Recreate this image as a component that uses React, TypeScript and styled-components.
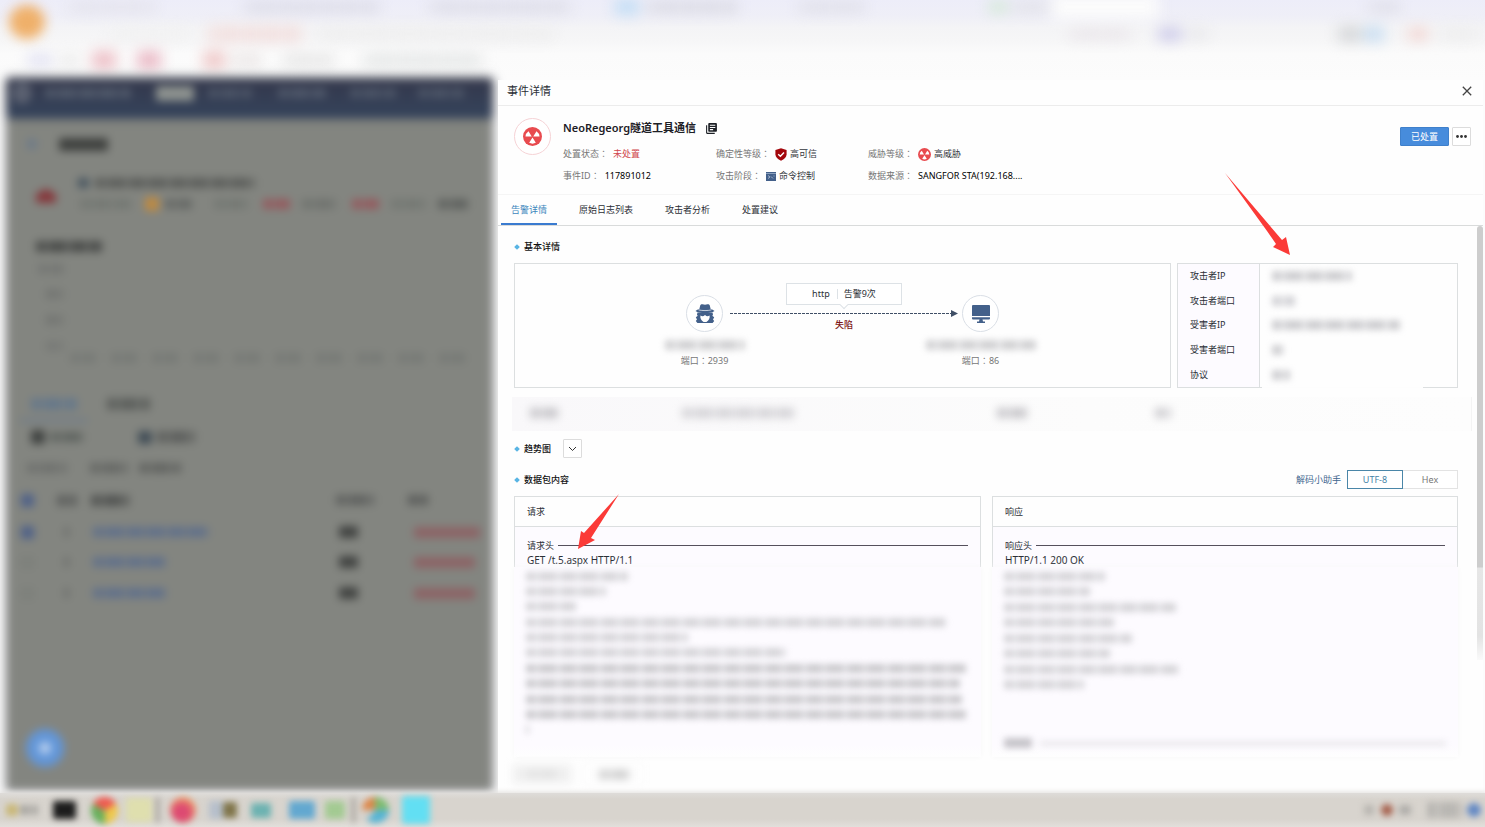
import React from "react";
import styled, { createGlobalStyle, css } from "styled-components";
import { MdLibraryBooks } from "react-icons/md";

const GlobalStyle = createGlobalStyle`
  *, *::before, *::after { box-sizing: border-box; }
  body {
    margin: 0;
    background: #fcfcfc;
    color: #2b2f36;
    font: 9px/14px "Noto Sans", "Noto Sans CJK SC", sans-serif;
  }
  button { font: inherit; color: inherit; cursor: pointer; }
`;

/* ---------- blurred placeholders ---------- */

type Mark = { gap?: number; w: number; h?: number; c?: string; fill?: string; round?: boolean; solid?: boolean };

const MarkLine = styled.div<{ $top?: number; $soft?: number }>`
  display: flex;
  align-items: center;
  height: 10px;
  margin-top: ${(p) => p.$top ?? 0}px;
  ${(p) => p.$soft && css`filter: blur(${p.$soft}px);`}
`;

const MarkBlock = styled.span<{ $m: Mark }>`
  flex: none;
  width: ${(p) => p.$m.w}px;
  height: ${(p) => p.$m.h ?? 10}px;
  margin-left: ${(p) => p.$m.gap ?? 0}px;
  border-radius: ${(p) => (p.$m.round ? "50%" : "2px")};
  color: ${(p) => p.$m.c ?? "#c4c4c6"};
  --thin: color-mix(in srgb, currentColor 55%, transparent);
  background: ${(p) =>
    p.$m.fill ??
    (p.$m.solid || p.$m.round
      ? "currentColor"
      : "repeating-linear-gradient(90deg, currentColor 0 9px, var(--thin) 9px 13px, currentColor 13px 30px, var(--thin) 30px 35px, currentColor 35px 41px)")};
`;

const Marks = ({ items, top, soft }: { items: Mark[]; top?: number; soft?: number }) => (
  <MarkLine $top={top} $soft={soft} aria-hidden="true">
    {items.map((m, i) => (
      <MarkBlock key={i} $m={m} />
    ))}
  </MarkLine>
);

/* ---------- page frame ---------- */

const Page = styled.div`
  display: flex;
  flex-direction: column;
  min-height: 100vh;
  overflow: hidden;
`;

const Browser = styled.header`
  position: relative;
  height: 80px;
  overflow: hidden;
  background: linear-gradient(#ededf9 0, #efeff7 16px, #f4f4f6 28px, #f6f6f7 40px, #fbfbfb 54px, #fcfcfc 80px);
`;

const BrowserMarks = styled.div`
  filter: blur(7px);
`;

const Avatar = styled.span`
  position: absolute;
  top: 5px;
  left: 9px;
  width: 36px;
  height: 34px;
  border-radius: 50%;
  background: #efb06a;
  filter: blur(6px);
`;

const Workspace = styled.main`
  flex: 1;
  display: grid;
  grid-template-columns: 498fr 985fr;
  padding-right: 2px;
`;

const Backdrop = styled.section`
  position: relative;
  margin: 0 7px 4px 8px;
  background: #838580;
  box-shadow: 0 0 6px 2px #7b7c80;
  filter: blur(4px);
`;

const BackdropNav = styled.div`
  height: 38px;
  padding-top: 8px;
  background: linear-gradient(#34384c, #35445c);
  box-shadow: 0 -1px 7px 0 #3c4152;
`;

const HelpBubble = styled.span`
  position: absolute;
  left: 18px;
  bottom: 22px;
  display: grid;
  place-items: center;
  width: 38px;
  height: 38px;
  border-radius: 50%;
  background: #6296d8;
  &::after {
    content: "";
    width: 12px;
    height: 12px;
    border-radius: 50%;
    background: #bcd2f0;
  }
`;

const Taskbar = styled.footer`
  position: relative;
  z-index: 2;
  display: flex;
  justify-content: space-between;
  height: 34px;
  padding: 12px 4px 0 6px;
  background: linear-gradient(#dedcd9, #d8d4ce 6px, #d8d4ce 26px, #e2dfdb);
  box-shadow: 0 0 5px 1px #e0dedb;
`;

/* ---------- drawer ---------- */

const Drawer = styled.section`
  position: relative;
  z-index: 1;
  display: flex;
  flex-direction: column;
  min-width: 0;
  background: #fefefe;
`;

const DrawerHead = styled.div`
  display: flex;
  align-items: center;
  justify-content: space-between;
  height: 26px;
  padding: 0 11px 4px 9px;
  border-bottom: 1px solid #ececec;
`;

const DrawerTitle = styled.h1`
  margin: 0;
  font-size: 11px;
  font-weight: 400;
  line-height: 16px;
`;

const CloseButton = styled.button`
  display: grid;
  place-items: center;
  padding: 0;
  border: 0;
  background: none;
  color: #444;
`;

const Summary = styled.div`
  display: flex;
  align-items: flex-start;
  height: 89px;
  padding: 12px 12px 0 16px;
  border-bottom: 1px solid #f5f5f5;
`;

const Ring = styled.span<{ $color: string }>`
  flex: none;
  display: grid;
  place-items: center;
  width: 37px;
  height: 37px;
  border: 1px solid ${(p) => p.$color};
  border-radius: 50%;
  background: #fff;
`;

const SummaryText = styled.div`
  flex: 1;
  margin-left: 12px;
`;

const EventName = styled.h2`
  display: flex;
  align-items: center;
  gap: 9px;
  margin: 2px 0 10px;
  font-size: 11px;
  font-weight: 600;
  line-height: 16px;
  color: #1d2026;
`;

const Facts = styled.dl`
  display: grid;
  grid-template-columns: 153px 152px 200px;
  row-gap: 6px;
  margin: 0;
`;

const Fact = styled.div`
  display: flex;
  align-items: center;
  height: 16px;
  white-space: nowrap;
`;

const FactLabel = styled.dt`
  color: #777;
`;

const MidColon = styled.span`
  font-family: "Noto Sans CJK TC", sans-serif;
`;

const FactValue = styled.dd<{ $tone?: "dark" | "red" }>`
  display: flex;
  align-items: center;
  gap: 3px;
  margin: 0 0 0 5px;
  color: ${(p) => (p.$tone === "red" ? "#d0454c" : p.$tone === "dark" ? "#000" : "#33363c")};
`;

const Actions = styled.div`
  display: flex;
  gap: 3px;
  margin-top: 9px;
`;

const PrimaryButton = styled.button`
  width: 49px;
  height: 19px;
  padding: 0;
  border: 1px solid #3f80cb;
  border-radius: 1px;
  background: #478cdc;
  color: #fff;
`;

const SquareButton = styled.button`
  display: grid;
  place-items: center;
  width: 19px;
  height: 19px;
  padding: 0;
  border: 1px solid #dcdcdc;
  border-radius: 1px;
  background: #fff;
  color: #333;
`;

const Tabs = styled.nav`
  display: flex;
  gap: 12px;
  height: 31px;
  padding-left: 3px;
  border-bottom: 1px solid #d9dbdb;
`;

const Tab = styled.button<{ $active?: boolean }>`
  padding: 2px 10px 0;
  border: 0;
  border-bottom: 2px solid ${(p) => (p.$active ? "#3a7bd0" : "transparent")};
  background: none;
  color: ${(p) => (p.$active ? "#3d86bd" : "#2b2f36")};
`;

const Scroller = styled.div`
  flex: 1;
  display: flex;
`;

const ScrollThumb = styled.span`
  flex: none;
  width: 6px;
  height: 434px;
  border-radius: 3px 3px 0 0;
  background: linear-gradient(#cdcdcd 341px, #e6e6e6 342px, #e3e3e3 410px, #fafafa);
`;

const Content = styled.div`
  flex: 1;
  min-width: 0;
  display: flex;
  flex-direction: column;
  padding: 12px 19px 0 16px;
`;

const SectionTitle = styled.h3`
  display: flex;
  align-items: center;
  gap: 5px;
  margin: 0;
  font-size: 9px;
  font-weight: 500;
  line-height: 18px;
  color: #111;
  &::before {
    content: "";
    width: 4px;
    height: 4px;
    margin: 0 0 0 1px;
    background: #58b4e4;
    transform: rotate(45deg);
  }
`;

const SectionBar = styled.div`
  display: flex;
  align-items: center;
  gap: 12px;
  height: 19px;
`;

const Overview = styled.div`
  display: grid;
  grid-template-columns: 657fr 281fr;
  gap: 6px;
  margin-top: 7px;
`;

const FlowCard = styled.div`
  display: flex;
  justify-content: center;
  height: 125px;
  border: 1px solid #dcdfe0;
`;

const FlowNode = styled.div`
  display: flex;
  flex-direction: column;
  align-items: center;
  width: 37px;
  padding-top: 31px;
  white-space: nowrap;
  color: #777;
`;

const NodePort = styled.span`
  margin-top: 4px;
`;

const FlowLink = styled.div`
  display: flex;
  flex-direction: column;
  align-items: center;
  width: 228px;
  margin: 0 4px 0 7px;
  padding-top: 19px;
`;

const Callout = styled.div`
  position: relative;
  display: flex;
  align-items: center;
  justify-content: center;
  width: 116px;
  height: 22px;
  margin-bottom: 3px;
  border: 1px solid #dde2e6;
  background: #fff;
  &::after {
    content: "";
    position: absolute;
    bottom: -4px;
    left: 54px;
    width: 6px;
    height: 6px;
    border: solid #dde2e6;
    border-width: 0 1px 1px 0;
    background: #fff;
    transform: rotate(45deg);
  }
`;

const CalloutPart = styled.span`
  line-height: 10px;
  & + & {
    margin-left: 7px;
    padding-left: 6px;
    border-left: 1px solid #dde2e6;
  }
`;

const Verdict = styled.strong`
  font-weight: 500;
  color: #7c1515;
`;

const InfoCard = styled.div`
  position: relative;
  border: 1px solid #dcdfe0;
  &::after {
    content: "";
    position: absolute;
    left: 84px;
    right: 34px;
    bottom: -1px;
    height: 1px;
    background: #fdfdfd;
  }
`;

const InfoTable = styled.table`
  width: 100%;
  height: 123px;
  border-collapse: collapse;
  th, td { padding: 0 0 0 12px; text-align: left; font-weight: 400; }
  th { width: 81px; border-right: 1px solid #dcdfe0; background: #fdfbff; }
`;

const ExtraRow = styled.div`
  height: 34px;
  margin: 9px -14px 8px -2px;
  padding-top: 11px;
  border-right: 1px solid #f4f4f4;
  background: linear-gradient(90deg, #f9f8fa, #fcfcfc 60%, #fdfdfd);
`;

const PacketBar = styled(SectionBar)`
  justify-content: space-between;
  margin-top: 12px;
`;

const Decoder = styled.div`
  display: flex;
  align-items: center;
`;

const DecoderLink = styled.a`
  margin-right: 6px;
  color: #3f668f;
  text-decoration: none;
`;

const Encoding = styled.button<{ $active?: boolean }>`
  position: relative;
  z-index: ${(p) => (p.$active ? 1 : 0)};
  width: 56px;
  height: 19px;
  padding: 0;
  margin-left: ${(p) => (p.$active ? 0 : -1)}px;
  border: 1px solid ${(p) => (p.$active ? "#4a86a8" : "#e3e3e3")};
  background: #fff;
  color: ${(p) => (p.$active ? "#4583a6" : "#777")};
`;

const Packets = styled.div`
  flex: 1;
  display: grid;
  grid-template-columns: 467fr 466fr;
  gap: 11px;
  margin-top: 7px;
`;

const Packet = styled.article`
  position: relative;
  display: flex;
  flex-direction: column;
`;

const PacketTitle = styled.h4`
  margin: 0;
  padding: 7px 12px;
  border: 1px solid #dcdfe0;
  font-size: 9px;
  font-weight: 400;
  line-height: 15px;
`;

const PacketHead = styled.div`
  height: 40px;
  padding: 11px 12px 0;
  border: solid #dcdfe0;
  border-width: 0 1px;
  background: #fdfbff;
`;

const Legend = styled.div`
  display: flex;
  align-items: center;
  gap: 4px;
  height: 15px;
  &::after {
    content: "";
    flex: 1;
    height: 1px;
    background: #55505c;
  }
`;

const PacketLine = styled.div`
  height: 14px;
  font-size: 10px;
  line-height: 14px;
  white-space: nowrap;
`;

const PacketRest = styled.div`
  flex: 1;
  padding: 4px 12px 0;
  overflow: hidden;
  background: linear-gradient(#fdfbff calc(100% - 12px), #fefefe);
  box-shadow: 0 0 6px #f8f8f8;
`;

const RestLines = styled.div<{ $count: number }>`
  display: flex;
  flex-direction: column;
  justify-content: space-between;
  height: ${(p) => p.$count * 15 - 1}px;
  filter: blur(3px);
`;

const RestSection = styled.div`
  display: flex;
  align-items: center;
  gap: 8px;
  margin-top: 48px;
  filter: blur(3px);
  &::after {
    content: "";
    flex: 1;
    height: 5px;
    background: #eae8ec;
  }
`;

const Pager = styled.div`
  display: flex;
  gap: 12px;
  height: 36px;
  padding: 7px 14px;
  filter: blur(4px);
`;

const PagerButton = styled.button<{ $disabled?: boolean }>`
  display: grid;
  place-items: center;
  width: 60px;
  height: 20px;
  padding: 0;
  border: 1px solid #f8f8f8;
  background: ${(p) => (p.$disabled ? "#f0f0f0" : "#fefefe")};
`;

const Pointer = styled.svg<{ $left: number; $top: number }>`
  position: absolute;
  z-index: 3;
  left: ${(p) => p.$left}px;
  top: ${(p) => p.$top}px;
  pointer-events: none;
`;

/* ---------- icons ---------- */

const RadiationIcon = ({ size }: { size: number }) => (
  <svg width={size} height={size} viewBox="0 0 20 20" aria-hidden="true">
    <circle cx="10" cy="10" r="10" fill="#e84b4f" />
    <path d="M9.200 10H2.600a7.500 7.500 0 0 1 3.200-5.600ZM10.800 10h6.600a7.500 7.500 0 0 0-3.200-5.600ZM10 11l3.500 5.700a8 8 0 0 1-7 0Z" fill="#fff" />
  </svg>
);

const ShieldIcon = () => (
  <svg width="12" height="13" viewBox="0 0 12 13" aria-hidden="true">
    <path d="M6 .3 11.600 2v4.300c0 3-2.400 5-5.600 6.400C2.800 11.300.4 9.300.4 6.300V2Z" fill="#a3060b" />
    <path d="m3.200 6.200 2.200 2.100 3.600-3.800" fill="none" stroke="#fff" strokeWidth="1.400" />
  </svg>
);

const StageIcon = () => (
  <svg width="10" height="9" viewBox="0 0 10 9" aria-hidden="true">
    <path d="M0 0h10v9H0Z" fill="#43608a" />
    <path d="M0 1.500h10" stroke="#8aa0bd" />
    <path d="m2 3.500 2 1.500-2 1.500M5 4.500 7 6.500M8 3.500v1" fill="none" stroke="#b9c7da" strokeWidth=".8" />
  </svg>
);

const AgentIcon = () => (
  <svg width="20" height="19" viewBox="0 0 20 19" aria-hidden="true" fill="#43608a">
    <path d="M5.200 1.600C5.500.5 6.600 0 7.500.2L10 .8l2.500-.6c.9-.2 2 .3 2.300 1.400l.9 3.600H4.300Z" />
    <path d="M.5 7C2.500 5 6 4.600 10 4.600s7.500.4 9.500 2.400c-2 1.500-5.500 2-9.500 2S2.500 8.500.5 7Z" />
    <path d="M3.600 5.900c4 .9 8.800.9 12.800 0" fill="none" stroke="#fff" strokeWidth=".7" />
    <path d="M2.400 8.400h15.200l.4 2.500-.8.8 2 1.500-1.200 2.300 1.200 1.500-1.600 2H2.400l-1.600-2L2 15.500.8 13.200l2-1.500-.8-.8Z" />
    <path d="M5.400 11.500c1.600.9 3.300.9 4.100-.2h1c.8 1.100 2.500 1.100 4.100.2.500 2.500-.9 5.300-3.200 6.500H8.600c-2.300-1.200-3.700-4-3.200-6.500Z" fill="#fff" />
  </svg>
);

const MonitorIcon = () => (
  <svg width="18" height="18" viewBox="0 0 18 18" aria-hidden="true" fill="#43608a">
    <path d="M1 0h16a1 1 0 0 1 1 1v10H0V1a1 1 0 0 1 1-1ZM0 12.200h18v1.300a1 1 0 0 1-1 1H1a1 1 0 0 1-1-1ZM7.500 14.500h3l.5 2h2V18H5v-1.500h2Z" />
  </svg>
);

const LinkArrow = () => (
  <svg width="228" height="10" viewBox="0 0 228 10" aria-hidden="true">
    <path d="M0 5.500h221" stroke="#3f4f66" strokeDasharray="3 1" />
    <path d="M221 2l7 3.500-7 3.500Z" fill="#3f4f66" />
  </svg>
);

/* ---------- data ---------- */

const ink = "#5c5e5b";
const faint = "#747873";
const blue = "#60708a";
const red = "#94595d";

const browserRows: { top: number; items: Mark[] }[] = [
  { top: 2, items: [{ gap: 70, w: 85, c: "#e2e1ea" }, { gap: 90, w: 135, c: "#d9d9e4" }, { gap: 50, w: 140, c: "#dadae4" }, { gap: 45, w: 24, h: 16, c: "#c3def5", solid: true }, { gap: 8, w: 90, c: "#d6d6df" }, { gap: 62, w: 65, c: "#dddde6" }, { gap: 125, w: 18, c: "#cfe8d0", solid: true }, { gap: 4, w: 40, c: "#e0e0e6" }, { w: 108, h: 26, c: "#fbfbfb", solid: true }, { gap: 210, w: 30, c: "#dcdce6" }] },
  { top: 17, items: [{ gap: 110, w: 80, c: "#f0f0f0" }, { gap: 18, w: 95, h: 16, c: "#f2dedd" }, { gap: 15, w: 235, c: "#ececec" }, { gap: 517, w: 60, c: "#e8e3e8" }, { gap: 28, w: 24, h: 14, c: "#ceccea", solid: true }, { gap: 6, w: 20, c: "#e4e4e8" }, { gap: 130, w: 24, h: 16, c: "#d6d8da", solid: true }, { gap: 2, w: 20, h: 16, c: "#c9def2", solid: true }, { gap: 24, w: 20, h: 12, c: "#f3d5d1", solid: true }, { gap: 12, w: 40, c: "#ececec" }] },
  { top: 16, items: [{ gap: 28, w: 24, c: "#d9d9f0" }, { gap: 8, w: 20, c: "#e6e6e6" }, { gap: 12, w: 24, h: 18, c: "#edc0c7", solid: true }, { gap: 21, w: 24, h: 18, c: "#eabac6", solid: true }, { gap: 42, w: 22, h: 18, c: "#efc9c9", solid: true }, { gap: 6, w: 30, c: "#e6e0e0" }, { gap: 22, w: 50, c: "#e0e0e0" }, { gap: 30, w: 120, c: "#dde0e0" }] },
];

const tableRow = (name: number, tag: number, checked: boolean): Mark[] => [
  { gap: 13, w: 13, h: 13, c: checked ? "#4f6188" : "#7d807b", solid: true },
  { gap: 30, w: 5, c: "#6c6e6b" },
  { gap: 24, w: name, c: blue },
  { gap: 246 - name, w: 19, h: 12, c: "#424442", solid: true },
  { gap: 56, w: tag, h: 11, c: "#8c6365", solid: true },
];

const backdropRows: { top: number; items: Mark[] }[] = [
  { top: 21, items: [{ gap: 19, w: 10, c: "#6d7a88" }, { gap: 22, w: 49, h: 13, c: "#404240", solid: true }] },
  { top: 29, items: [{ gap: 70, w: 12, c: "#46545f" }, { gap: 5, w: 160, c: ink }] },
  { top: 1, items: [{ gap: 28, w: 20, h: 17, fill: "linear-gradient(150deg, transparent 35%, #85383c 36%) 0 0 / 10px no-repeat, linear-gradient(210deg, transparent 35%, #85383c 36%) 10px 0 / 10px no-repeat" }] },
  { top: 0, items: [{ gap: 72, w: 52, c: faint }, { gap: 13, w: 14, h: 14, c: "#bd8a42", solid: true }, { gap: 6, w: 27, c: "#666966" }, { gap: 22, w: 35, c: faint }, { gap: 14, w: 27, c: red }, { gap: 12, w: 35, c: "#70736f" }, { gap: 15, w: 27, c: red }, { gap: 12, w: 36, c: faint }, { gap: 11, w: 30, c: "#5f625f" }] },
  { top: 32, items: [{ gap: 28, w: 66, h: 11, c: "#4a4c4a" }] },
  { top: 13, items: [{ gap: 30, w: 26, c: "#757774" }] },
  { top: 15, items: [{ gap: 38, w: 17, c: "#737572" }] },
  { top: 16, items: [{ gap: 38, w: 17, c: "#737572" }] },
  { top: 16, items: [{ gap: 38, w: 17, c: "#777976" }] },
  { top: 2, items: Array.from({ length: 10 }, (_, i) => ({ gap: i ? 15 : 62, w: 26, c: "#777a76" })) },
  { top: 36, items: [{ gap: 23, w: 46, h: 12, c: "#66788a" }, { gap: 30, w: 43, h: 12, c: "#5d605d" }] },
  { top: 6, items: [{ gap: 12, w: 68, h: 3, c: "#6b7a8b", solid: true }] },
  { top: 7, items: [{ gap: 23, w: 14, h: 14, c: "#404341", solid: true }, { gap: 5, w: 34, c: "#606561" }, { gap: 54, w: 14, h: 13, c: "#424e57", solid: true }, { gap: 5, w: 38, h: 12, c: "#5e605e" }] },
  { top: 21, items: [{ gap: 19, w: 40, c: "#6f716e" }, { gap: 23, w: 38, c: "#666865" }, { gap: 11, w: 42, c: "#626461" }] },
  { top: 22, items: [{ gap: 13, w: 13, h: 13, c: "#4f6188", solid: true }, { gap: 23, w: 20, h: 11, c: "#5e605e" }, { gap: 14, w: 38, h: 11, c: "#525452" }, { gap: 207, w: 38, c: "#5f615f" }, { gap: 34, w: 20, c: "#5a5c5a" }] },
  { top: 22, items: tableRow(116, 66, true) },
  { top: 20, items: tableRow(73, 61, false) },
  { top: 21, items: tableRow(73, 61, false) },
];

const taskIcons: Mark[] = [
  { w: 12, h: 12, c: "#c9b879", solid: true }, { gap: 2, w: 18, c: "#a9a7a2" },
  { gap: 15, w: 23, h: 18, c: "#1c1c1c", solid: true },
  { gap: 15, w: 27, h: 27, round: true, fill: "conic-gradient(from -60deg, #ee5a50 0 120deg, #eec84c 120deg 240deg, #68b05c 240deg)" },
  { gap: 8, w: 26, h: 24, c: "#dfdfae", solid: true }, { gap: 4, w: 3, h: 26, c: "#9a968f", solid: true },
  { gap: 11, w: 26, h: 26, round: true, fill: "radial-gradient(circle at 45% 60%, #dd4a72 35%, #f0a860 75%)" },
  { gap: 13, w: 14, h: 18, c: "#b6bfcb", solid: true }, { w: 14, h: 16, c: "#80754a", solid: true },
  { gap: 14, w: 20, h: 15, c: "#6cb2b1", solid: true },
  { gap: 18, w: 26, h: 18, c: "#62a8d0", solid: true },
  { gap: 10, w: 20, h: 18, c: "#a3ca92", solid: true }, { gap: 7, w: 3, h: 26, c: "#9a968f", solid: true },
  { gap: 7, w: 27, h: 26, round: true, fill: "conic-gradient(#7cbc70 0 90deg, #55b4d4 90deg 220deg, #d4d0ca 220deg 270deg, #dd8648 270deg)" },
  { gap: 13, w: 28, h: 28, c: "#62dff3", solid: true },
];

const trayIcons: Mark[] = [
  { w: 10, c: "#b8b5b0", solid: true }, { gap: 7, w: 12, h: 12, c: "#a5604c", round: true },
  { gap: 6, w: 12, c: "#b0aeaa", solid: true }, { gap: 16, w: 36, h: 16, c: "#b9b7b3" },
  { gap: 4, w: 14, h: 14, c: "#6389c4", round: true },
];

const tabs = ["告警详情", "原始日志列表", "攻击者分析", "处置建议"];

const info: [string, Mark][] = [
  ["攻击者IP", { w: 80, c: "#cfcfd2" }],
  ["攻击者端口", { w: 23, c: "#d4d4d8" }],
  ["受害者IP", { w: 128, c: "#cfcfd2" }],
  ["受害者端口", { w: 12, c: "#cfcfd2" }],
  ["协议", { w: 18, c: "#cfcfd2" }],
];

const requestWidths = [102, 80, 50, 420, 162, 260, 440, 434, 436, 440, 3];
const responseWidths = [101, 86, 172, 110, 128, 106, 175, 80];

/* ---------- page ---------- */

const Colon = () => <MidColon lang="zh-TW">：</MidColon>;

const FactItem = ({ label, tone, children }: {
  label: string; tone?: "dark" | "red"; children: React.ReactNode;
}) => (
  <Fact>
    <FactLabel>{label}<Colon /></FactLabel>
    <FactValue $tone={tone}>{children}</FactValue>
  </Fact>
);

const PacketView = ({ title, legend, line, widths, children }: {
  title: string; legend: string; line: string; widths: number[]; children?: React.ReactNode;
}) => (
  <Packet>
    <PacketTitle>{title}</PacketTitle>
    <PacketHead>
      <Legend>{legend}</Legend>
      <PacketLine>{line}</PacketLine>
    </PacketHead>
    <PacketRest>
      <RestLines $count={widths.length}>
        {widths.map((w, i) => (
          <Marks key={i} items={[{ w, h: 9, c: w > 430 ? "#cbcace" : "#d6d5d9" }]} />
        ))}
      </RestLines>
      {children}
    </PacketRest>
  </Packet>
);

export default function App() {
  return (
    <>
      <GlobalStyle />
      <Page lang="zh-CN">
        <Browser>
          <BrowserMarks>
            {browserRows.map((r, i) => <Marks key={i} {...r} />)}
          </BrowserMarks>
          <Avatar />
        </Browser>

        <Workspace>
          <Backdrop aria-hidden="true">
            <BackdropNav>
              <Marks items={[{ gap: 4, w: 20, h: 22, c: "#5a6070", round: true }, { gap: 13, w: 86, c: "#515a6b" }, { gap: 25, w: 38, h: 15, c: "#8d928f", solid: true }, { gap: 14, w: 44, c: "#4c5567" }, { gap: 26, w: 48, c: "#4f586a" }, { gap: 24, w: 46, c: "#4c5567" }, { gap: 22, w: 46, c: "#4c5567" }]} />
            </BackdropNav>
            {backdropRows.map((r, i) => <Marks key={i} {...r} />)}
            <HelpBubble />
          </Backdrop>

          <Drawer>
            <DrawerHead>
              <DrawerTitle>事件详情</DrawerTitle>
              <CloseButton aria-label="关闭">
                <svg width="10" height="10" viewBox="0 0 10 10" aria-hidden="true">
                  <path d="m.8.8 8.400 8.400M9.200.8.8 9.200" stroke="currentColor" strokeWidth="1.300" />
                </svg>
              </CloseButton>
            </DrawerHead>

            <Summary>
              <Ring $color="#f6d3d6"><RadiationIcon size={19} /></Ring>
              <SummaryText>
                <EventName>NeoRegeorg隧道工具通信<MdLibraryBooks size={13} /></EventName>
                <Facts>
                  <FactItem label="处置状态" tone="red">未处置</FactItem>
                  <FactItem label="确定性等级"><ShieldIcon />高可信</FactItem>
                  <FactItem label="威胁等级"><RadiationIcon size={13} />高威胁</FactItem>
                  <FactItem label="事件ID" tone="dark">117891012</FactItem>
                  <FactItem label="攻击阶段"><StageIcon />命令控制</FactItem>
                  <FactItem label="数据来源" tone="dark">SANGFOR STA(192.168....</FactItem>
                </Facts>
              </SummaryText>
              <Actions>
                <PrimaryButton>已处置</PrimaryButton>
                <SquareButton aria-label="更多">
                  <svg width="11" height="3" viewBox="0 0 11 3" aria-hidden="true" fill="currentColor">
                    <circle cx="1.500" cy="1.500" r="1.400" />
                    <circle cx="5.500" cy="1.500" r="1.400" />
                    <circle cx="9.500" cy="1.500" r="1.400" />
                  </svg>
                </SquareButton>
              </Actions>
            </Summary>

            <Tabs>
              {tabs.map((t, i) => <Tab key={t} $active={i === 0}>{t}</Tab>)}
            </Tabs>

            <Scroller>
              <Content>
                <SectionTitle>基本详情</SectionTitle>
                <Overview>
                  <FlowCard>
                    <FlowNode>
                      <Ring $color="#dadfe6"><AgentIcon /></Ring>
                      <Marks top={8} soft={3} items={[{ w: 80, c: "#d2d2d4" }]} />
                      <NodePort>端口<Colon />2939</NodePort>
                    </FlowNode>
                    <FlowLink>
                      <Callout><CalloutPart>http</CalloutPart><CalloutPart>告警9次</CalloutPart></Callout>
                      <LinkArrow />
                      <Verdict>失陷</Verdict>
                    </FlowLink>
                    <FlowNode>
                      <Ring $color="#dadfe6"><MonitorIcon /></Ring>
                      <Marks top={8} soft={3} items={[{ w: 110, c: "#d2d2d4" }]} />
                      <NodePort>端口<Colon />86</NodePort>
                    </FlowNode>
                  </FlowCard>
                  <InfoCard>
                    <InfoTable>
                      <tbody>
                        {info.map(([label, mark]) => (
                          <tr key={label}>
                            <th scope="row">{label}</th>
                            <td><Marks soft={3} items={[mark]} /></td>
                          </tr>
                        ))}
                      </tbody>
                    </InfoTable>
                    <Pointer $left={47} $top={-91} width="66" height="84" viewBox="0 0 66 84" aria-hidden="true">
                      <path d="M0 0 57 67l4-3 4 18-17-8 3-3-9-13Z" fill="#fb3a37" />
                    </Pointer>
                  </InfoCard>
                </Overview>

                <ExtraRow>
                  <Marks soft={4} items={[{ gap: 18, w: 28, c: "#c6c5c9" }, { gap: 124, w: 112, c: "#d3d2d6" }, { gap: 203, w: 30, c: "#c6c5c9" }, { gap: 128, w: 16, c: "#cccbcf" }]} />
                </ExtraRow>

                <SectionBar>
                  <SectionTitle>趋势图</SectionTitle>
                  <SquareButton aria-label="展开趋势图">
                    <svg width="9" height="6" viewBox="0 0 9 6" aria-hidden="true">
                      <path d="m1 1 3.500 3.500L8 1" fill="none" stroke="currentColor" />
                    </svg>
                  </SquareButton>
                </SectionBar>

                <PacketBar>
                  <SectionTitle>数据包内容</SectionTitle>
                  <Decoder>
                    <DecoderLink href="#decoder">解码小助手</DecoderLink>
                    <Encoding $active>UTF-8</Encoding>
                    <Encoding>Hex</Encoding>
                  </Decoder>
                </PacketBar>

                <Packets>
                  <PacketView title="请求" legend="请求头" line="GET /t.5.aspx HTTP/1.1" widths={requestWidths}>
                    <Pointer $left={64} $top={-2} width="42" height="56" viewBox="0 0 42 56" aria-hidden="true">
                      <path d="M41 0 13 44l4 2L0 55l3-18 3 2Z" fill="#fb3a37" />
                    </Pointer>
                  </PacketView>
                  <PacketView title="响应" legend="响应头" line="HTTP/1.1 200 OK" widths={responseWidths}>
                    <RestSection><MarkBlock $m={{ w: 28, c: "#c6c4ca", solid: true }} /></RestSection>
                  </PacketView>
                </Packets>
              </Content>
              <ScrollThumb />
            </Scroller>

            <Pager>
              <PagerButton $disabled aria-label="上一条"><MarkBlock $m={{ w: 30, h: 8, c: "#e2e2e2" }} /></PagerButton>
              <PagerButton aria-label="下一条"><MarkBlock $m={{ w: 30, h: 9, c: "#cccccc" }} /></PagerButton>
            </Pager>
          </Drawer>
        </Workspace>

        <Taskbar aria-hidden="true">
          <Marks soft={3} items={taskIcons} />
          <Marks soft={3} items={trayIcons} />
        </Taskbar>
      </Page>
    </>
  );
}
